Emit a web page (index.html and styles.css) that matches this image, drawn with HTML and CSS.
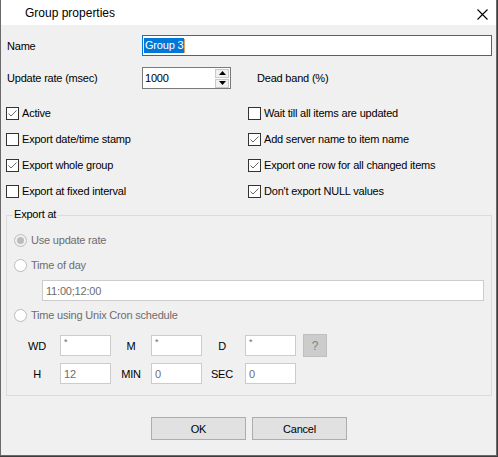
FILE: index.html
```html
<!DOCTYPE html>
<html>
<head>
<meta charset="utf-8">
<link rel="stylesheet" href="styles.css">
</head>
<body>
<div class="window">
  <div class="titlebar">
    <span class="title">Group properties</span>
    <svg class="close" viewBox="0 0 11 11" width="11" height="11"><path d="M0.5 0.5 L10.5 10.5 M10.5 0.5 L0.5 10.5" stroke="#000" stroke-width="1.1" fill="none"/></svg>
  </div>
  <div class="content">
    <div class="row name-row">
      <span class="lbl">Name</span>
      <div class="field name-field"><span class="sel">Group 3</span><span class="caret"></span></div>
    </div>
    <div class="row rate-row">
      <span class="lbl">Update rate (msec)</span>
      <div class="field rate-field">
        <span class="val">1000</span>
        <div class="spin">
          <span class="spin-btn"><svg viewBox="0 0 7 4" width="7" height="4"><path d="M3.5 0 L7 4 L0 4 Z" fill="#000"/></svg></span>
          <span class="spin-btn"><svg viewBox="0 0 7 4" width="7" height="4"><path d="M0 0 L7 0 L3.5 4 Z" fill="#000"/></svg></span>
        </div>
      </div>
      <span class="deadband">Dead band (%)</span>
    </div>
    <div class="checks">
      <div class="chk"><span class="box on"><svg viewBox="0 0 11 11" width="11" height="11"><path d="M1.5 5.5 L4 8 L9.5 2.5" stroke="#666" stroke-width="1" fill="none"/></svg></span><span>Active</span></div>
      <div class="chk"><span class="box"></span><span>Wait till all items are updated</span></div>
      <div class="chk"><span class="box"></span><span>Export date/time stamp</span></div>
      <div class="chk"><span class="box on"><svg viewBox="0 0 11 11" width="11" height="11"><path d="M1.5 5.5 L4 8 L9.5 2.5" stroke="#666" stroke-width="1" fill="none"/></svg></span><span>Add server name to item name</span></div>
      <div class="chk"><span class="box on"><svg viewBox="0 0 11 11" width="11" height="11"><path d="M1.5 5.5 L4 8 L9.5 2.5" stroke="#666" stroke-width="1" fill="none"/></svg></span><span>Export whole group</span></div>
      <div class="chk"><span class="box on"><svg viewBox="0 0 11 11" width="11" height="11"><path d="M1.5 5.5 L4 8 L9.5 2.5" stroke="#666" stroke-width="1" fill="none"/></svg></span><span>Export one row for all changed items</span></div>
      <div class="chk"><span class="box"></span><span>Export at fixed interval</span></div>
      <div class="chk"><span class="box on"><svg viewBox="0 0 11 11" width="11" height="11"><path d="M1.5 5.5 L4 8 L9.5 2.5" stroke="#666" stroke-width="1" fill="none"/></svg></span><span>Don't export NULL values</span></div>
    </div>
    <div class="group">
      <span class="legend">Export at</span>
      <div class="radio-row r1"><span class="radio checked"></span><span class="dis">Use update rate</span></div>
      <div class="radio-row r2"><span class="radio"></span><span class="dis">Time of day</span></div>
      <div class="field dfield tod"><span>11:00;12:00</span></div>
      <div class="radio-row r3"><span class="radio"></span><span class="dis">Time using Unix Cron schedule</span></div>
      <div class="cron">
        <span class="clbl">WD</span><div class="field dfield small"><span class="star">*</span></div>
        <span class="clbl">M</span><div class="field dfield small"><span class="star">*</span></div>
        <span class="clbl c3">D</span><div class="field dfield small"><span class="star">*</span></div>
        <span></span><div class="qbtn">?</div>
        <span class="clbl">H</span><div class="field dfield small"><span>12</span></div>
        <span class="clbl">MIN</span><div class="field dfield small"><span>0</span></div>
        <span class="clbl c3">SEC</span><div class="field dfield small"><span>0</span></div>
      </div>
    </div>
    <div class="buttons">
      <div class="btn">OK</div>
      <div class="btn">Cancel</div>
    </div>
  </div>
</div>
</body>
</html>
```

FILE: styles.css
```css
* { box-sizing: border-box; }
html, body { margin: 0; padding: 0; background: #3d3d3d; }
body {
  font-family: "Liberation Sans", Arial, sans-serif;
  font-size: 11px;
  letter-spacing: -0.2px;
  color: #000;
  width: 498px;
  height: 457px;
  overflow: hidden;
}
.window {
  width: 497px;
  height: 456px;
  background: #f0f0f0;
  border: 1px solid #6a6a6a;
  border-top: none;
  display: flex;
  flex-direction: column;
}
.titlebar {
  height: 25px;
  flex: none;
  background: #fff;
  display: flex;
  align-items: center;
  padding-left: 24px;
}
.title { font-size: 12px; letter-spacing: 0; flex: 1; }
.close { margin-right: 8px; margin-top: 4px; }
.content {
  flex: 1;
  padding: 0 4px 0 5px;
  display: flex;
  flex-direction: column;
}
.row {
  display: grid;
  align-items: center;
}
.lbl { padding-left: 1px; }
.name-row {
  grid-template-columns: 136px 1fr;
  margin-top: 10px;
  height: 21px;
}
.field {
  background: #fff;
  border: 1px solid #7a7a7a;
  display: flex;
  align-items: center;
  height: 21px;
}
.name-field {
  border-color: #0078d7;
  padding-left: 1px;
}
.sel {
  background: #0078d7;
  color: #fff;
  line-height: 15px;
  padding: 0 1px;
}
.caret { width: 1px; height: 14px; background: #e0a060; }
.rate-row {
  grid-template-columns: 136px 89px auto;
  margin-top: 11px;
  height: 22px;
}
.rate-field {
  height: 22px;
  padding-left: 2px;
  justify-content: space-between;
}
.spin {
  display: flex;
  flex-direction: column;
  gap: 1px;
  margin-right: 1px;
}
.spin-btn {
  width: 14px;
  height: 9px;
  background: #f0f0f0;
  border: 1px solid #c9c9c9;
  display: flex;
  align-items: center;
  justify-content: center;
}
.deadband { margin-left: 26px; }
.checks {
  margin-top: 11px;
  display: grid;
  grid-template-columns: 242px 1fr;
  grid-auto-rows: 26px;
}
.chk {
  display: flex;
  align-items: center;
  gap: 3px;
}
.box {
  width: 13px;
  height: 13px;
  border: 1px solid #333;
  background: #fff;
  display: flex;
  flex: none;
}
.group {
  margin-top: 11px;
  height: 181px;
  border: 1px solid #dcdcdc;
  position: relative;
  padding: 0 7px;
  display: flex;
  flex-direction: column;
}
.legend {
  position: absolute;
  top: -8px;
  left: 6px;
  padding: 0 1px;
  background: #f0f0f0;
  line-height: 13px;
}
.radio-row {
  display: flex;
  align-items: center;
  gap: 4px;
  height: 16px;
}
.r1 { margin-top: 16px; }
.r2 { margin-top: 9px; }
.r3 { margin-top: 6px; }
.radio {
  width: 13px;
  height: 13px;
  border-radius: 50%;
  border: 1px solid #bcbcbc;
  background: #fff;
  display: flex;
  align-items: center;
  justify-content: center;
  flex: none;
}
.radio.checked { background: #f0f0f0; }
.radio.checked::after {
  content: "";
  width: 7px;
  height: 7px;
  border-radius: 50%;
  background: #bcbcbc;
}
.dis { color: #6d6d6d; }
.dfield {
  border-color: #cccccc;
  color: #6d6d6d;
  padding-left: 3px;
}
.tod { margin-top: 7px; margin-left: 28px; }
.cron {
  margin-top: 12px;
  display: grid;
  grid-template-columns: 46px 51px 40px 51px 43px 51px 7px 24px;
  grid-auto-rows: 21px;
  row-gap: 7px;
  align-items: center;
}
.clbl { text-align: center; }
.c3 { padding-right: 3px; }
.small { height: 21px; }
.star { align-self: flex-start; font-size: 9px; line-height: 11px; padding-top: 1px; }
.qbtn {
  width: 24px;
  height: 23px;
  background: #cccccc;
  border: 1px solid #bfbfbf;
  color: #838383;
  display: flex;
  align-items: center;
  justify-content: center;
  font-size: 12px;
}
.buttons {
  margin-top: 21px;
  display: flex;
  justify-content: center;
  gap: 6px;
}
.btn {
  width: 95px;
  height: 23px;
  background: #e1e1e1;
  border: 1px solid #adadad;
  display: flex;
  align-items: center;
  justify-content: center;
}
```
